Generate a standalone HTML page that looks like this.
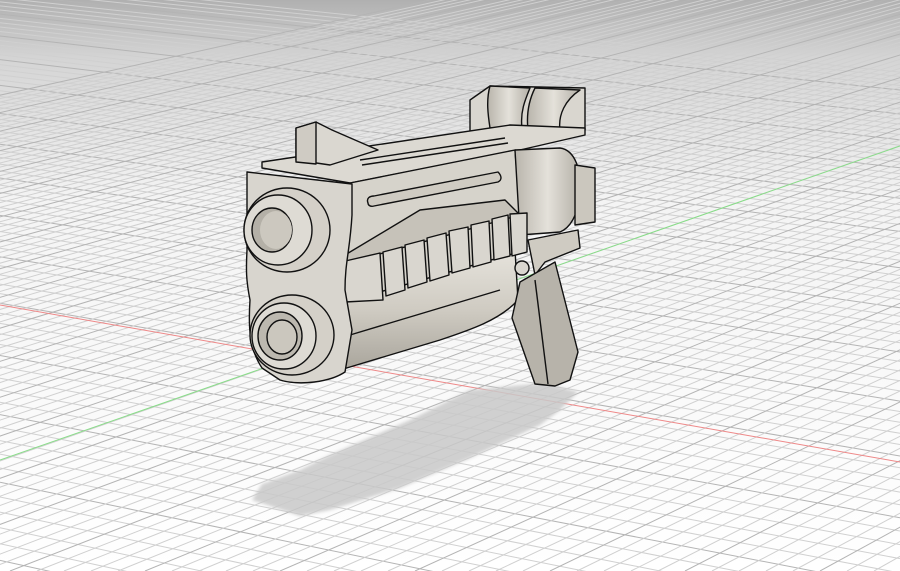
<!DOCTYPE html>
<html><head><meta charset="utf-8"><style>
html,body{margin:0;padding:0;width:900px;height:571px;overflow:hidden;background:#fff}
svg{display:block}
</style></head><body>
<svg id="s" width="900" height="571" viewBox="0 0 900 571" xmlns="http://www.w3.org/2000/svg">
<defs>
<linearGradient id="bg" x1="0" y1="0" x2="0" y2="1">
<stop offset="0" stop-color="#b0b0b0"/><stop offset="0.1" stop-color="#d4d4d4"/><stop offset="0.35" stop-color="#f4f4f4"/><stop offset="1" stop-color="#ffffff"/>
</linearGradient>
<linearGradient id="cyl" x1="0" y1="0" x2="0" y2="1">
<stop offset="0" stop-color="#e6e3dc"/><stop offset="0.5" stop-color="#cfcbc2"/><stop offset="1" stop-color="#a9a59c"/>
</linearGradient>
<linearGradient id="drum" x1="0" y1="0" x2="1" y2="0">
<stop offset="0" stop-color="#b9b5ac"/><stop offset="0.5" stop-color="#e4e1da"/><stop offset="1" stop-color="#b3afa6"/>
</linearGradient>
<filter id="bl"><feGaussianBlur stdDeviation="1.5"/></filter>
</defs>
<rect width="900" height="571" fill="url(#bg)"/>
<g id="grid" stroke-width="1" fill="none"></g>
<line x1="0" y1="305" x2="900" y2="462" stroke="#e88" stroke-width="1"/>
<line x1="0" y1="460" x2="900" y2="146" stroke="#8d8" stroke-width="1"/>
<polygon filter="url(#bl)" fill="#c9c9c9" opacity="0.85" points="252,500 262,484 300,470 330,455 410,420 470,390 545,383 578,392 560,410 540,425 470,458 400,488 330,510 300,516"/>
<g stroke="#111" stroke-width="1.4" stroke-linejoin="round">
<polygon fill="#d9d6cf" points="470,100 490,86 585,88 585,130 520,140 470,140"/>
<path fill="url(#drum)" d="M490,86 L530,88 C525,100 520,112 522,128 L490,128 C488,115 486,100 490,86Z"/>
<path fill="url(#drum)" d="M535,88 L580,90 C565,100 558,115 560,130 L528,130 C526,112 530,98 535,88Z"/>
<polygon fill="#dcd9d2" points="262,162 510,125 585,128 585,135 520,150 350,183 262,168"/>
<line x1="360" y1="160" x2="505" y2="138"/>
<line x1="362" y1="165" x2="508" y2="143"/>
<polygon fill="#dad7d0" points="296,128 316,122 332,130 378,150 330,165 296,160"/>
<polygon fill="#cfcbc3" points="296,128 316,122 316,164 296,162"/>
<polygon fill="#d6d3cb" points="350,183 515,150 520,215 520,232 345,290"/>
<path fill="#cfcbc2" d="M368,203 C366,198 370,196 374,196 L498,172 C502,176 502,180 498,182 L374,206 C370,207 368,205 368,203Z"/>
<polygon fill="#c6c2b9" points="345,255 420,210 505,200 520,215 345,268"/>
<path fill="url(#drum)" d="M515,150 L560,148 C575,150 582,170 580,195 C578,215 570,228 560,232 L520,235Z"/>
<polygon fill="#cbc7be" points="575,165 595,168 595,222 575,225"/>
<path fill="url(#cyl)" d="M345,300 L515,250 L518,300 C500,320 470,330 440,340 L340,370Z"/>
<line x1="345" y1="300" x2="515" y2="250"/>
<line x1="350" y1="335" x2="500" y2="290"/>
<polygon fill="#d4d1c9" points="340,265 520,215 526,250 345,302"/>
<g fill="#d9d6cf">
<polygon points="341,262 380,253 383,300 345,302"/>
<polygon points="383,252 402,247 405,290 386,296"/>
<polygon points="405,245 424,240 427,282 408,288"/>
<polygon points="427,238 446,233 449,275 430,281"/>
<polygon points="449,231 468,227 470,268 452,273"/>
<polygon points="471,225 489,221 491,262 473,267"/>
<polygon points="492,219 508,215 510,256 494,260"/>
<polygon points="510,214 527,213 527,252 512,256"/>
</g>
<polygon fill="#cfcbc2" points="528,240 578,230 580,248 545,262 535,275"/>
<polygon fill="#b7b3aa" points="520,282 555,262 578,352 570,380 555,386 535,384 512,318"/>
<line x1="535" y1="280" x2="548" y2="384"/>
<circle cx="522" cy="268" r="7" fill="#d9d6cf"/>
<path fill="#d8d5ce" d="M247,172 L352,184 L352,215 C350,250 345,262 345,290 L352,330 L345,372 C330,382 300,386 280,380 L262,368 C250,350 248,330 250,300 C246,280 246,270 247,250Z"/>
<ellipse cx="287" cy="230" rx="43" ry="42" fill="#d4d0c8"/>
<ellipse cx="278" cy="230" rx="34" ry="35" fill="#dedbd4"/>
<ellipse cx="272" cy="230" rx="20" ry="22" fill="#b4b0a7"/>
<ellipse cx="276" cy="230" rx="16" ry="19" fill="#ccc8bf" stroke="none"/>
<ellipse cx="292" cy="335" rx="42" ry="40" fill="#d4d0c8"/>
<ellipse cx="284" cy="336" rx="32" ry="33" fill="#dedbd4"/>
<ellipse cx="280" cy="336" rx="22" ry="24" fill="#bcb8af"/>
<ellipse cx="282" cy="337" rx="15" ry="17" fill="#cbc7be"/>
</g>
<script>
(function(){
var g=document.getElementById('grid');var ns='http://www.w3.org/2000/svg';
var H=-532,VA=[-4924,H],VB=[2834,H];
function ln(x1,y1,x2,y2,c){var l=document.createElementNS(ns,'line');l.setAttribute('x1',x1);l.setAttribute('y1',y1);l.setAttribute('x2',x2);l.setAttribute('y2',y2);l.setAttribute('stroke',c);g.appendChild(l);}
var C=71000;
for(var n=50;n<140;n++){var y0=H+C/n;var sl=(y0-H)/(-VA[0]);var c=(n%5==0)?'#b4b4b4':'#d0d0d0';ln(0,y0,900,y0+sl*900,c);}
for(var j=-80;j<80;j++){var xb=27*j+10;var dx=xb-VB[0],dy=571-VB[1];var c=(j%5==0)?'#b4b4b4':'#d0d0d0';ln(xb,571,VB[0]+dx*0.05,VB[1]+dy*0.05,c);}
})();
</script>
</svg>
</body></html>
